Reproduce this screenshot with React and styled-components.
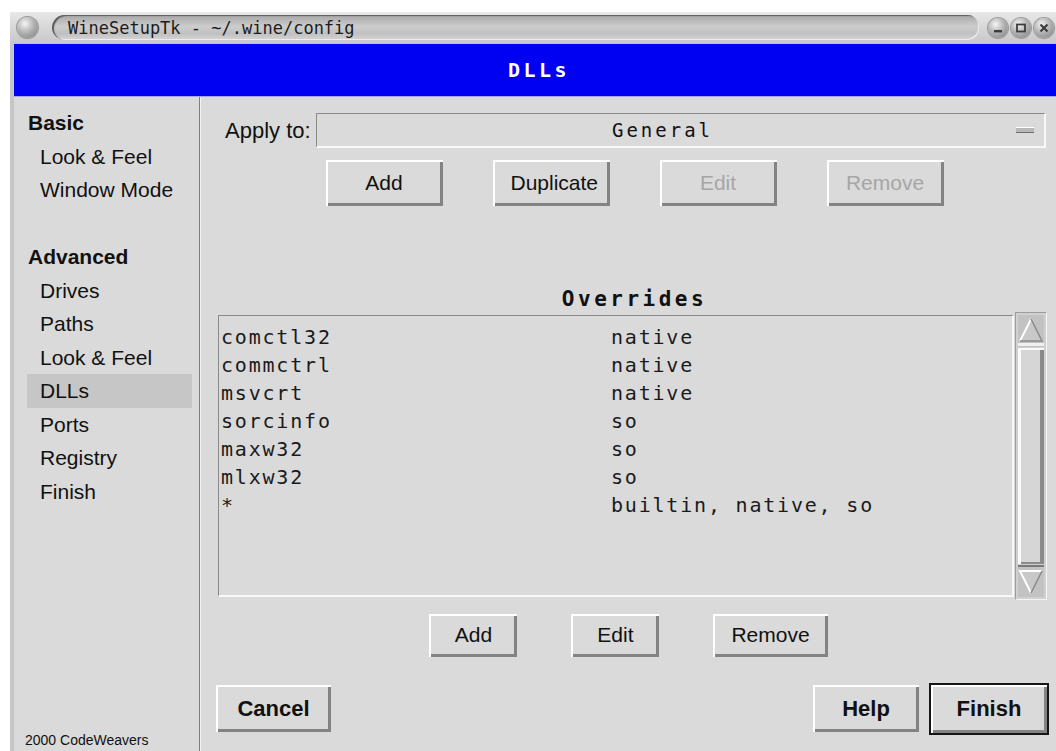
import React from "react";
import styled, { createGlobalStyle } from "styled-components";

const Global = createGlobalStyle`
  html, body { margin: 0; padding: 0; background: #ffffff; }
  body { width: 1056px; height: 751px; overflow: hidden; }
`;

const sans = `"Liberation Sans", Arial, Helvetica, sans-serif`;
const mono = `"DejaVu Sans Mono", "Liberation Mono", monospace`;

const Window = styled.div`
  margin: 12px 0 0 10px;
  width: 1046px;
  height: 739px;
  display: flex;
  flex-direction: column;
  overflow: hidden;
  background: #dadada;
`;

/* ---------- window manager title bar ---------- */
const TitleBar = styled.div`
  height: 31px;
  flex: none;
  display: flex;
  align-items: center;
  padding: 0 0 0 7px;
  background: linear-gradient(#e8e8e8, #d4d4d4 60%, #c8c8c8);
  box-sizing: border-box;
`;

const Orb = styled.div`
  width: ${(p) => p.$size || 21}px;
  height: ${(p) => p.$size || 21}px;
  border-radius: 50%;
  flex: none;
  display: flex;
  align-items: center;
  justify-content: center;
  background: radial-gradient(circle at 38% 32%, #f4f4f4 0%, #b4b4b4 45%, #7c7c7c 100%);
  box-shadow: 0 0 0 1px #9a9a9a;
`;

const TitlePill = styled.div`
  flex: 1;
  height: 25px;
  margin-left: 14px;
  border-radius: 13px 12px 12px 13px;
  background: linear-gradient(#a6a6a6, #cdcdcd 45%, #c0c0c0 75%, #d6d6d6);
  box-shadow: inset 2px 1px 1px #5c5c5c, inset -1px -1px 0 #ececec;
  display: flex;
  align-items: center;
  padding-left: 16px;
  font-family: ${mono};
  font-size: 17px;
  color: #1c1c1c;
  white-space: nowrap;
  overflow: hidden;
`;

const WinButtons = styled.div`
  display: flex;
  gap: 3px;
  margin: 0 2px 0 9px;
`;

const Header = styled.div`
  height: 54px;
  flex: none;
  box-sizing: border-box;
  background: #0000f2;
  border-top: 1px solid #b8b8ff;
  border-bottom: 1px solid #a8a8e6;
  display: flex;
  align-items: center;
  justify-content: center;
  padding-left: 8px;
  font-family: ${mono};
  font-weight: bold;
  font-size: 20px;
  letter-spacing: 3.5px;
  color: #ffffff;
`;

const Client = styled.div`
  flex: 1;
  display: flex;
  flex-direction: column;
  border-left: 4px solid #c6c6c6;
  min-height: 0;
`;

const Body = styled.div`
  flex: 1;
  display: flex;
  min-height: 0;
`;

/* ---------- navigation column ---------- */
const Sidebar = styled.nav`
  width: 186px;
  flex: none;
  display: flex;
  flex-direction: column;
  padding-top: 9px;
  box-sizing: border-box;
  border-right: 1px solid #7e7e7e;
  box-shadow: 1px 0 0 #f2f2f2;
  font-family: ${sans};
  font-size: 21px;
  color: #111;
`;

const NavHeading = styled.div`
  height: 33.5px;
  line-height: 33.5px;
  padding-left: 14px;
  font-weight: bold;
`;

const NavItem = styled.div`
  height: 33.5px;
  line-height: 33.5px;
  margin: 0 7px 0 13px;
  padding-left: 13px;
  background: ${(p) => (p.$active ? "#c6c6c6" : "transparent")};
`;

const NavGap = styled.div`
  height: 33.5px;
`;

const Credit = styled.div`
  margin-top: auto;
  padding: 0 0 3px 11px;
  font-size: 14px;
  line-height: 16px;
`;

/* ---------- page content ---------- */
const Main = styled.main`
  flex: 1;
  display: flex;
  flex-direction: column;
  margin-left: 1px;
  font-family: ${sans};
  color: #111;
`;

const ApplyRow = styled.div`
  margin-top: 16px;
  height: 35px;
  display: flex;
  align-items: center;
  padding: 0 10px 0 24px;
`;

const Label = styled.span`
  width: 91px;
  flex: none;
  font-size: 22px;
`;

const Sunken = styled.div`
  box-sizing: border-box;
  border-top: 1px solid #8a8a8a;
  border-left: 1px solid #8a8a8a;
  border-right: 2px solid #f8f8f8;
  border-bottom: 2px solid #f8f8f8;
`;

const Combo = styled(Sunken)`
  flex: 1;
  height: 35px;
  display: flex;
  align-items: center;
`;

const ComboText = styled.span`
  flex: 1;
  text-align: center;
  font-family: ${mono};
  font-size: 19px;
  letter-spacing: 3px;
  padding-right: 8px;
`;

const ComboMark = styled.span`
  width: 18px;
  height: 4px;
  margin-right: 10px;
  background: #b8b8b8;
  border-top: 1px solid #ffffff;
  border-bottom: 1px solid #6e6e6e;
`;

const ButtonRow = styled.div`
  display: flex;
  justify-content: ${(p) => p.$justify || "center"};
  align-items: center;
  gap: ${(p) => p.$gap || 0}px;
  margin-top: ${(p) => p.$top || 0}px;
  height: ${(p) => p.$height || 46}px;
  padding: ${(p) => p.$pad || "0"};
`;

const Button = styled.button`
  box-sizing: border-box;
  height: ${(p) => p.$h || 46}px;
  width: ${(p) => (p.$w ? `${p.$w}px` : "auto")};
  min-width: 88px;
  padding: 0 18px;
  margin: 0;
  background: #dadada;
  border: ${(p) => (p.$default ? "2px solid #161616" : "none")};
  box-shadow: inset 2px 2px 0 #ffffff, inset -3px -3px 0 #838383;
  font-family: ${sans};
  font-size: ${(p) => (p.$bold ? 22 : 21)}px;
  font-weight: ${(p) => (p.$bold ? "bold" : "normal")};
  color: ${(p) => (p.$disabled ? "#a6a6a6" : "#111")};
  cursor: default;
`;

const Spacer = styled.div`
  flex: 1;
`;

const SectionTitle = styled.div`
  margin-top: 80px;
  height: 26px;
  line-height: 26px;
  text-align: center;
  padding-left: 12px;
  font-family: ${mono};
  font-weight: bold;
  font-size: 21px;
  letter-spacing: 3.5px;
`;

const ListArea = styled.div`
  height: 288px;
  display: flex;
  align-items: center;
  padding: 0 9px 0 17px;
  gap: 1px;
`;

const List = styled(Sunken)`
  flex: 1;
  height: 282px;
  padding: 7px 0 0 2px;
  font-family: ${mono};
  font-size: 20px;
  letter-spacing: 1.8px;
  color: #1a1a1a;
`;

const ListRow = styled.div`
  display: grid;
  grid-template-columns: 390px 1fr;
  height: 28px;
  line-height: 28px;
  white-space: nowrap;
`;

const Scrollbar = styled.div`
  width: 32px;
  height: 288px;
  box-sizing: border-box;
  display: flex;
  flex-direction: column;
  background: #d0d0d0;
  border-top: 1px solid #9c9c9c;
  border-left: 1px solid #9c9c9c;
  border-right: 1px solid #f4f4f4;
  border-bottom: 1px solid #f4f4f4;
  padding: 2px;
`;

const Thumb = styled.div`
  flex: 1;
  margin: 1px 0;
  background: #d6d6d6;
  box-shadow: inset 3px 2px 0 #fafafa, inset -4px -2px 0 #8a8a8a;
`;

function Arrow({ up }) {
  return (
    <svg width="26" height="32" viewBox="0 0 26 32" style={{ display: "block" }}>
      <rect x="0" y="0" width="26" height="32" fill="#c2c2c2" />
      {up ? (
        <g>
          <polygon points="13,4 24,26 2,26" fill="#c8c8c8" />
          <polyline points="2,26 13,4" stroke="#ffffff" strokeWidth="2" fill="none" />
          <polyline points="13,4 24,26 2,26" stroke="#8a8a8a" strokeWidth="1.5" fill="none" />
          <rect x="0" y="28" width="26" height="3" fill="#f0f0f0" />
        </g>
      ) : (
        <g>
          <rect x="0" y="0" width="26" height="2" fill="#7a7a7a" />
          <polygon points="2,6 24,6 13,28" fill="#c8c8c8" />
          <polyline points="24,6 2,6 13,28" stroke="#ffffff" strokeWidth="2" fill="none" />
          <polyline points="24,6 13,28" stroke="#8a8a8a" strokeWidth="1.5" fill="none" />
        </g>
      )}
    </svg>
  );
}

function MinimizeGlyph() {
  return (
    <svg width="12" height="12" viewBox="0 0 12 12">
      <rect x="2" y="8" width="8" height="2.4" fill="#3c3c3c" />
    </svg>
  );
}

function MaximizeGlyph() {
  return (
    <svg width="12" height="12" viewBox="0 0 12 12">
      <rect x="2" y="2.5" width="8" height="7" fill="none" stroke="#3c3c3c" strokeWidth="1.8" />
    </svg>
  );
}

function CloseGlyph() {
  return (
    <svg width="12" height="12" viewBox="0 0 12 12">
      <path d="M2.5 2.5 L9.5 9.5 M9.5 2.5 L2.5 9.5" stroke="#3c3c3c" strokeWidth="2.2" />
    </svg>
  );
}

const overrides = [
  ["comctl32", "native"],
  ["commctrl", "native"],
  ["msvcrt", "native"],
  ["sorcinfo", "so"],
  ["maxw32", "so"],
  ["mlxw32", "so"],
  ["*", "builtin, native, so"],
];

export default function App() {
  return (
    <>
      <Global />
      <Window>
        <TitleBar>
          <Orb />
          <TitlePill>WineSetupTk - ~/.wine/config</TitlePill>
          <WinButtons>
            <Orb $size={20}><MinimizeGlyph /></Orb>
            <Orb $size={20}><MaximizeGlyph /></Orb>
            <Orb $size={20}><CloseGlyph /></Orb>
          </WinButtons>
        </TitleBar>
        <Client>
          <Header>DLLs</Header>
          <Body>
            <Sidebar>
              <NavHeading>Basic</NavHeading>
              <NavItem>Look &amp; Feel</NavItem>
              <NavItem>Window Mode</NavItem>
              <NavGap />
              <NavHeading>Advanced</NavHeading>
              <NavItem>Drives</NavItem>
              <NavItem>Paths</NavItem>
              <NavItem>Look &amp; Feel</NavItem>
              <NavItem $active>DLLs</NavItem>
              <NavItem>Ports</NavItem>
              <NavItem>Registry</NavItem>
              <NavItem>Finish</NavItem>
              <Credit>2000 CodeWeavers</Credit>
            </Sidebar>
            <Main>
              <ApplyRow>
                <Label>Apply to:</Label>
                <Combo>
                  <ComboText>General</ComboText>
                  <ComboMark />
                </Combo>
              </ApplyRow>
              <ButtonRow $top={12} $height={46} $gap={50} $pad="0 0 0 12px">
                <Button $w={117}>Add</Button>
                <Button $w={117}>Duplicate</Button>
                <Button $w={117} $disabled>Edit</Button>
                <Button $w={117} $disabled>Remove</Button>
              </ButtonRow>
              <SectionTitle>Overrides</SectionTitle>
              <ListArea>
                <List>
                  {overrides.map(([name, mode]) => (
                    <ListRow key={name}>
                      <span>{name}</span>
                      <span>{mode}</span>
                    </ListRow>
                  ))}
                </List>
                <Scrollbar>
                  <Arrow up />
                  <Thumb />
                  <Arrow />
                </Scrollbar>
              </ListArea>
              <ButtonRow $top={13} $height={44} $gap={54}>
                <Button $h={43}>Add</Button>
                <Button $h={43}>Edit</Button>
                <Button $h={43}>Remove</Button>
              </ButtonRow>
              <ButtonRow $top={26} $height={51} $gap={10} $justify="flex-start" $pad="0 7px 0 15px">
                <Button $bold $w={115} $h={47}>Cancel</Button>
                <Spacer />
                <Button $bold $w={106} $h={47}>Help</Button>
                <Button $bold $default $w={120} $h={52}>Finish</Button>
              </ButtonRow>
            </Main>
          </Body>
        </Client>
      </Window>
    </>
  );
}
